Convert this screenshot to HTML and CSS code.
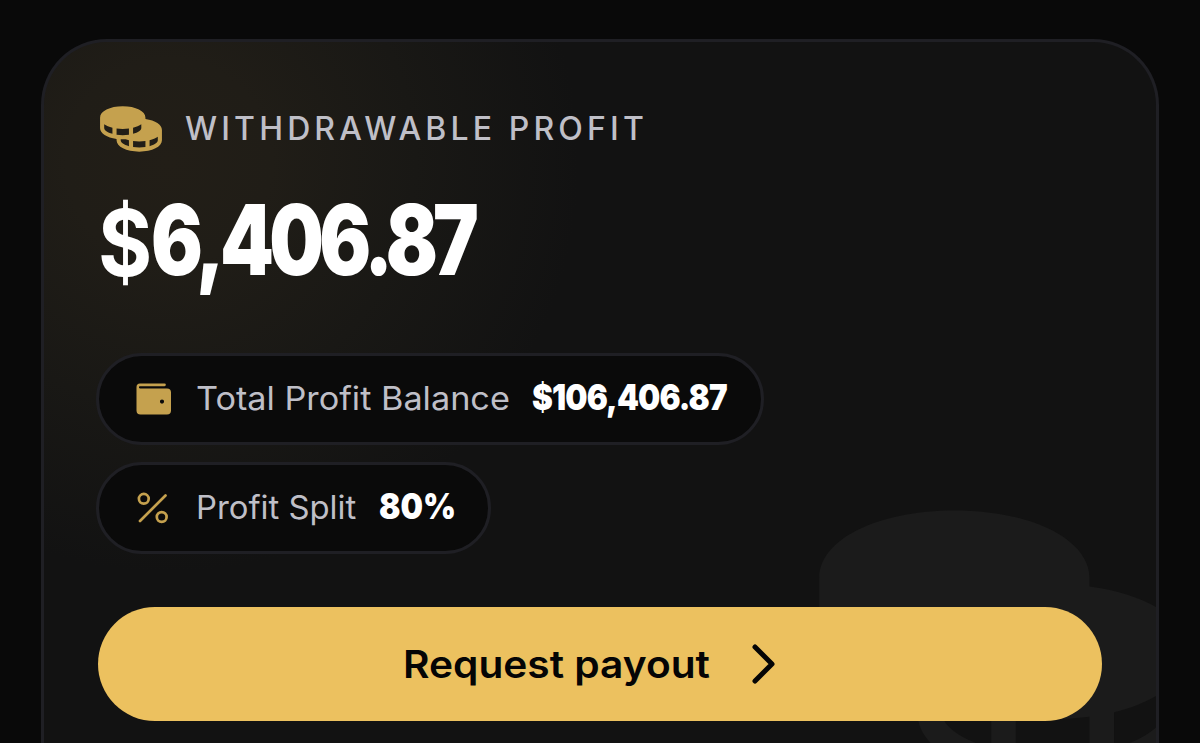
FILE: index.html
```html
<!DOCTYPE html>
<html lang="en">
<head>
<meta charset="utf-8">
<title>Withdrawable profit</title>
<link rel="stylesheet" href="styles.css">
</head>
<body>
<svg class="defs" width="0" height="0" aria-hidden="true">
  <symbol id="coins" viewBox="0 0 256 256"><path d="M184,89.57V84c0-25.08-37.83-44-88-44S8,58.92,8,84v40c0,20.89,26.25,37.49,64,42.46V172c0,25.08,37.83,44,88,44s88-18.92,88-44V132C248,111.3,222.58,94.68,184,89.57ZM56,146.87C36.41,141.4,24,132.39,24,124V109.93c8.16,5.78,19.09,10.44,32,13.57Zm80-23.37c12.91-3.13,23.84-7.79,32-13.57V124c0,8.39-12.41,17.4-32,22.87Zm-16,71.37C100.41,189.4,88,180.39,88,172v-4.17c2.63.1,5.29.17,8,.17,3.88,0,7.67-.13,11.39-.35A121.92,121.92,0,0,0,120,171.41Zm0-44.62A163,163,0,0,1,96,152a163,163,0,0,1-24-1.75V126.46A183.74,183.74,0,0,0,96,128a183.74,183.74,0,0,0,24-1.54Zm64,48a165.45,165.45,0,0,1-48,0V174.4a179.48,179.48,0,0,0,24,1.6,183.74,183.74,0,0,0,24-1.54ZM232,172c0,8.39-12.41,17.4-32,22.87V171.5c12.91-3.13,23.84-7.79,32-13.57Z"/></symbol>
</svg>
<main class="card">
  <svg class="watermark"><use href="#coins"/></svg>
  <header class="heading">
    <svg class="heading-icon"><use href="#coins"/></svg>
    <h1 class="title">WITHDRAWABLE PROFIT</h1>
  </header>
  <div class="amount"><span class="dollar">$</span><span class="figures">6,406.87</span></div>
  <section class="stats">
    <div class="pill pill-balance">
      <svg class="pill-icon" viewBox="0 0 40 40"><path fill-rule="evenodd" d="M6 4.500H30.500a1.300 1.300 0 0 1 0 2.700H6a.8.8 0 0 0 0 2.200H33a4 4 0 0 1 4 4V31.500a4 4 0 0 1-4 4H6.500a4 4 0 0 1-4-4V8A3.500 3.500 0 0 1 6 4.500ZM28 20.500a2.100 2.100 0 1 0 0 4.200a2.100 2.100 0 0 0 0-4.200Z"/></svg>
      <span class="label label-balance"><span class="fit">Total Profit Balance</span></span>
      <strong class="value value-balance"><span class="fit">$106,406.87</span></strong>
    </div>
    <div class="pill pill-split">
      <svg class="pill-icon percent" viewBox="0 0 40 40"><path d="M31.500 7.500 6 33"/><circle cx="9.800" cy="10.800" r="4.900"/><circle cx="27.700" cy="29" r="4.900"/></svg>
      <span class="label label-split"><span class="fit">Profit Split</span></span>
      <strong class="value value-split"><span class="fit">80%</span></strong>
    </div>
  </section>
  <button class="payout">
    <span class="payout-text"><span class="fit">Request payout</span></span>
    <svg class="chevron" viewBox="0 0 24 40"><path d="M3 3 20 20 3 37"/></svg>
  </button>
</main>
</body>
</html>
```
FILE: styles.css
```css
* { box-sizing: border-box; }
body {
  margin: 0;
  height: 743px;
  overflow: hidden;
  padding: 39px 41px 0;
  background: #090909;
  font-family: Inter, "Liberation Sans", sans-serif;
}
.defs { position: absolute; }
svg { flex: none; fill: currentColor; }
.card {
  position: relative;
  height: 704px;
  padding: 54px 54px 0;
  overflow: hidden;
  border: 3px solid #1f1f24;
  border-bottom: 0;
  border-radius: 66px 66px 0 0;
  background: radial-gradient(circle 410px at 125px 120px, #221e17 0%, #201d17 25%, #191815 60%, #121212 100%) #121212;
}
.watermark {
  position: absolute;
  left: 763px;
  top: 407px;
  width: 393px;
  height: 393px;
  color: #1b1b1b;
}
.heading { position: relative; display: flex; align-items: center; height: 66px; }
.heading-icon { width: 66px; height: 66px; color: #c5a14e; }
.title { margin: 0 0 1px 21px; font-size: 32px; line-height: 40px; font-weight: 500; letter-spacing: 4.15px; color: #bfbfc7; white-space: nowrap; }
.fit { display: inline-block; transform-origin: left center; white-space: nowrap; }
.amount {
  display: flex;
  height: 110px;
  margin-top: 22px;
  line-height: 112px;
  font-size: 97px;
  font-weight: 900;
  color: #fff;
  white-space: nowrap;
}
.dollar { width: 53px; font-weight: 700; font-size: 92px; line-height: 118px; transform: scaleX(.9); transform-origin: left; }
.figures { letter-spacing: -6px; transform: scaleX(.793); transform-origin: left; }
.stats { position: relative; display: flex; flex-direction: column; align-items: flex-start; gap: 17px; margin-top: 59px; margin-left: -2px; }
.pill {
  display: flex;
  align-items: center;
  height: 92px;
  padding-left: 35px;
  border: 3px solid #1f1f24;
  border-radius: 46px;
  background: #0a0a0a;
}
.pill-balance { width: 668px; }
.pill-split { width: 395px; }
.pill-icon { width: 40px; height: 40px; color: #c5a14e; }
.percent { fill: none; stroke: currentColor; stroke-width: 2.700; stroke-linecap: round; }
.label { margin: 0 0 1px 22px; font-size: 32px; line-height: 44px; color: #bfbfc7; }
.label-balance { width: 336px; }
.label-balance .fit { transform: scaleX(1.07); }
.label-split { width: 183px; }
.label-split .fit { transform: scaleX(1.025); }
.value { margin-bottom: 4px; font-size: 36px; line-height: 44px; font-weight: 900; color: #fff; }
.value-balance .fit { transform: scaleX(.87); letter-spacing: -1px; }
.value-split .fit { transform: scaleX(.88); }
.payout {
  position: relative;
  display: flex;
  align-items: center;
  width: 1004px;
  height: 114px;
  margin-top: 53px;
  padding: 0 0 0 305px;
  border: 0;
  border-radius: 57px;
  background: #ecc15f;
  color: #050505;
  font: 600 38px/50px Inter, sans-serif;
}
.payout-text { width: 349px; text-align: left; }
.payout-text .fit { transform: scaleX(1.07); }
.chevron { width: 24px; height: 40px; fill: none; stroke: currentColor; stroke-width: 5; stroke-linecap: round; stroke-linejoin: round; }
```
